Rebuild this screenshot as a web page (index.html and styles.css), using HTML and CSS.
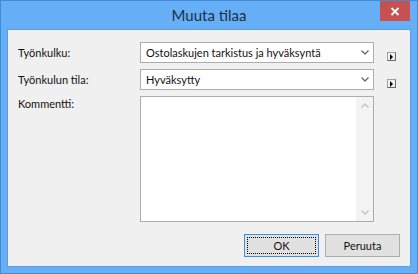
FILE: index.html
```html
<!DOCTYPE html>
<html lang="fi">
<head>
    <meta charset="UTF-8">
    <title>Muuta tilaa</title>
    <link rel="stylesheet" href="styles.css">
</head>
<body>
    <div class="window">
        <div class="titlebar">
            <span></span>
            <div class="title">Muuta tilaa</div>
            <button class="close" title="Sulje">
                <svg width="10" height="9" viewBox="0 0 10 9"><path d="M1.5 1 L8.5 8 M8.5 1 L1.5 8" stroke="#fff" stroke-width="1.8" fill="none"/></svg>
            </button>
        </div>

        <div class="client">
            <div class="form">
                <div class="label">Työnkulku:</div>
                <div class="combo">
                    <span class="combo-text">Ostolaskujen tarkistus ja hyväksyntä</span>
                    <span class="drop"><svg width="8" height="5" viewBox="0 0 8 5"><path d="M0.5 0.5 L4 4 L7.5 0.5" stroke="#6a6a6a" stroke-width="1.3" fill="none"/></svg></span>
                </div>
                <button class="mini"><svg width="4" height="6" viewBox="0 0 4 6"><path d="M0 0 L3 3 L0 6 Z" fill="#000"/></svg></button>

                <div class="label">Työnkulun tila:</div>
                <div class="combo">
                    <span class="combo-text">Hyväksytty</span>
                    <span class="drop"><svg width="8" height="5" viewBox="0 0 8 5"><path d="M0.5 0.5 L4 4 L7.5 0.5" stroke="#6a6a6a" stroke-width="1.3" fill="none"/></svg></span>
                </div>
                <button class="mini"><svg width="4" height="6" viewBox="0 0 4 6"><path d="M0 0 L3 3 L0 6 Z" fill="#000"/></svg></button>

                <div class="label label-top">Kommentti:</div>
                <div class="memo">
                    <div class="memo-text"></div>
                    <div class="scrollbar">
                        <span class="arrow"><svg width="8" height="5" viewBox="0 0 8 5"><path d="M0.5 4.5 L4 1 L7.5 4.5" stroke="#c2c2c2" stroke-width="1.3" fill="none"/></svg></span>
                        <span class="track"></span>
                        <span class="arrow"><svg width="8" height="5" viewBox="0 0 8 5"><path d="M0.5 0.5 L4 4 L7.5 0.5" stroke="#c2c2c2" stroke-width="1.3" fill="none"/></svg></span>
                    </div>
                </div>
            </div>

            <div class="actions">
                <button class="btn btn-default"><span class="focus">OK</span></button>
                <button class="btn"><span class="plain">Peruuta</span></button>
            </div>
        </div>
    </div>
</body>
</html>
```

FILE: styles.css
```css
html, body {
    margin: 0;
    padding: 0;
}
body {
    width: 418px;
    height: 274px;
    font-family: Lato, "Liberation Sans", sans-serif;
    font-size: 11px;
    color: #000;
    background: #fff;
}
.window {
    box-sizing: border-box;
    width: 418px;
    height: 274px;
    background: #66aff6;
    border: 1px solid #3f8bd8;
    padding: 0 6px 6px;
    display: flex;
    flex-direction: column;
}
.titlebar {
    height: 28px;
    display: grid;
    grid-template-columns: 1fr auto 1fr;
    align-items: start;
}
.title {
    font-size: 15px;
    line-height: 28px;
    color: #1b2f45;
}
.close {
    justify-self: end;
    margin-right: 1px;
    width: 30px;
    height: 20px;
    border: none;
    padding: 0;
    background: #c75050;
    display: flex;
    align-items: center;
    justify-content: center;
}
.client {
    flex: 1;
    background: #f0f0f0;
    border: 1px solid #5a9de4;
    padding: 12px 10px 9px;
    display: flex;
    flex-direction: column;
}
.form {
    display: grid;
    grid-template-columns: 122px 234px 22px;
    row-gap: 6px;
}
.label {
    align-self: center;
    color: #111;
}
.label-top {
    align-self: start;
    padding-top: 1px;
}
.combo {
    box-sizing: border-box;
    height: 21px;
    background: #fff;
    border: 1px solid #acacac;
    display: flex;
    align-items: center;
}
.combo-text {
    flex: 1;
    padding-left: 5px;
    white-space: nowrap;
    color: #111;
}
.drop {
    width: 17px;
    height: 100%;
    display: flex;
    align-items: center;
    justify-content: center;
}
.mini {
    justify-self: end;
    align-self: start;
    margin-top: 10px;
    box-sizing: border-box;
    width: 9px;
    height: 9px;
    padding: 0;
    background: #f0f0f0;
    border: 1px solid #a0a0a0;
    border-right-color: #696969;
    border-bottom-color: #696969;
    display: flex;
    align-items: center;
    justify-content: center;
}
.memo {
    box-sizing: border-box;
    height: 126px;
    background: #fff;
    border: 1px solid #acacac;
    display: flex;
}
.memo-text {
    flex: 1;
}
.scrollbar {
    width: 17px;
    background: #f3f3f3;
    display: flex;
    flex-direction: column;
}
.arrow {
    height: 17px;
    display: flex;
    align-items: center;
    justify-content: center;
}
.track {
    flex: 1;
}
.actions {
    margin-top: auto;
    display: flex;
    justify-content: flex-end;
    gap: 6px;
}
.btn {
    box-sizing: border-box;
    width: 75px;
    height: 23px;
    padding: 2px;
    background: #e1e1e1;
    border: 1px solid #adadad;
    font-family: inherit;
    font-size: 11px;
    color: #111;
    display: flex;
}
.btn-default {
    border-color: #3c8fdc;
}
.focus, .plain {
    flex: 1;
    display: flex;
    align-items: center;
    justify-content: center;
}
.focus {
    border: 1px dotted #000;
}
```
